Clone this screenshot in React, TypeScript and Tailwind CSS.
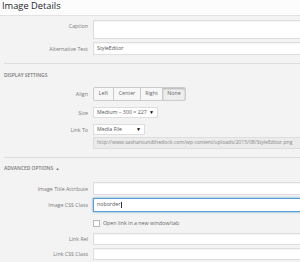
const font = { fontFamily: '"Open Sans", "Liberation Sans", sans-serif' };

function Label({ text, top = false }: { text: string; top?: boolean }) {
  return (
    <div
      className={`w-[90px] shrink-0 text-right pr-[2px] text-[5.3px] text-[#7a7a7a] ${
        top ? 'leading-[12px]' : 'self-center leading-[10px]'
      }`}
    >
      {text}
    </div>
  );
}

function Field({ label, h, value, mt, top }: { label: string; h: string; value?: string; mt: string; top?: boolean }) {
  return (
    <div className={`flex ${mt}`}>
      <Label text={label} top={top} />
      <div className={`ml-[3px] flex-1 ${h} bg-white border border-[#dddddd] shadow-[inset_0_1px_1px_rgba(0,0,0,0.04)] flex items-center px-[3px] text-[5.3px] text-[#555]`}>
        {value}
      </div>
    </div>
  );
}

export default function App() {
  const aligns = ['Left', 'Center', 'Right', 'None'];
  return (
    <div className="w-[300px] h-[262px] overflow-hidden bg-[#f3f3f3]" style={font}>
      <div className="w-[330px]">
        <div className="h-[16px] bg-[#fcfcfc] border-b border-[#e2e2e2] pl-[2px]">
          <h1 className="text-[9.3px] leading-[12px] text-[#23282d]">Image Details</h1>
        </div>

        <Field label="Caption" h="h-[19px]" mt="mt-[4px]" top />
        <Field label="Alternative Text" h="h-[13px]" mt="mt-[3px]" value="StyleEditor" />

        <div className="mt-[8px] ml-[4px] h-px bg-[#dddddd]" />
        <h2 className="mt-[6px] ml-[4px] text-[4.9px] leading-[10px] font-semibold uppercase text-[#777]">Display Settings</h2>

        <div className="flex mt-[7px]">
          <Label text="Align" />
          <div className="ml-[3px] flex h-[14px]">
            {aligns.map((a, i) => (
              <div
                key={a}
                className={`flex items-center justify-center border border-[#cccccc] text-[5.3px] text-[#666] ${
                  i > 0 ? '-ml-px' : 'rounded-l-[2px]'
                } ${i === 3 ? 'rounded-r-[2px] bg-[#eeeeee] border-[#aaa] shadow-[inset_0_1px_2px_rgba(0,0,0,0.25)]' : 'bg-[#f7f7f7]'} ${
                  ['w-[21px]', 'w-[28px]', 'w-[23px]', 'w-[24px]'][i]
                }`}
              >
                {a}
              </div>
            ))}
          </div>
        </div>

        <div className="flex mt-[6px]">
          <Label text="Size" />
          <div className="ml-[3px] w-[65px] h-[11px] bg-white border border-[#dddddd] flex items-center justify-between px-[3px] text-[5.3px] text-[#555]">
            <span>Medium – 300 × 227</span>
            <span className="text-[5px] text-black">▼</span>
          </div>
        </div>

        <div className="flex mt-[6px]">
          <Label text="Link To" />
          <div className="ml-[3px] w-[52px] h-[11px] bg-white border border-[#dddddd] flex items-center justify-between px-[3px] text-[5.3px] text-[#555]">
            <span>Media File</span>
            <span className="text-[5px] text-black">▼</span>
          </div>
        </div>

        <div className="flex mt-[2px]">
          <div className="w-[90px] shrink-0" />
          <div className="ml-[3px] flex-1 h-[12px] bg-[#ebebeb] border border-[#dddddd] flex items-center px-[3px] text-[5.1px] text-[#888] whitespace-nowrap">
            http://www.sasharoundthedock.com/wp-content/uploads/2015/08/StyleEditor.png
          </div>
        </div>

        <div className="mt-[8px] ml-[4px] h-px bg-[#dddddd]" />
        <h2 className="mt-[5px] ml-[4px] text-[4.9px] leading-[10px] font-semibold uppercase text-[#777]">
          Advanced Options <span className="ml-[1px] text-[4px]">▲</span>
        </h2>

        <Field label="Image Title Attribute" h="h-[13px]" mt="mt-[8px]" />

        <div className="flex mt-[3px]">
          <Label text="Image CSS Class" />
          <div className="ml-[3px] flex-1 h-[14px] bg-white border border-[#5b9dd9] shadow-[0_0_2px_rgba(30,140,190,0.8)] flex items-center px-[3px] text-[5.3px] text-[#555]">
            noborder<span className="ml-px w-px h-[6px] bg-[#333]" />
          </div>
        </div>

        <div className="flex mt-[8px] h-[7px] items-center">
          <div className="w-[90px] shrink-0" />
          <div className="ml-[3px] w-[7px] h-[7px] bg-white border border-[#b4b9be]" />
          <span className="ml-[3px] text-[5.3px] leading-[7px] text-[#666]">Open link in a new window/tab</span>
        </div>

        <Field label="Link Rel" h="h-[12px]" mt="mt-[6px]" />
        <Field label="Link CSS Class" h="h-[12px]" mt="mt-[3px]" />
      </div>
    </div>
  );
}
